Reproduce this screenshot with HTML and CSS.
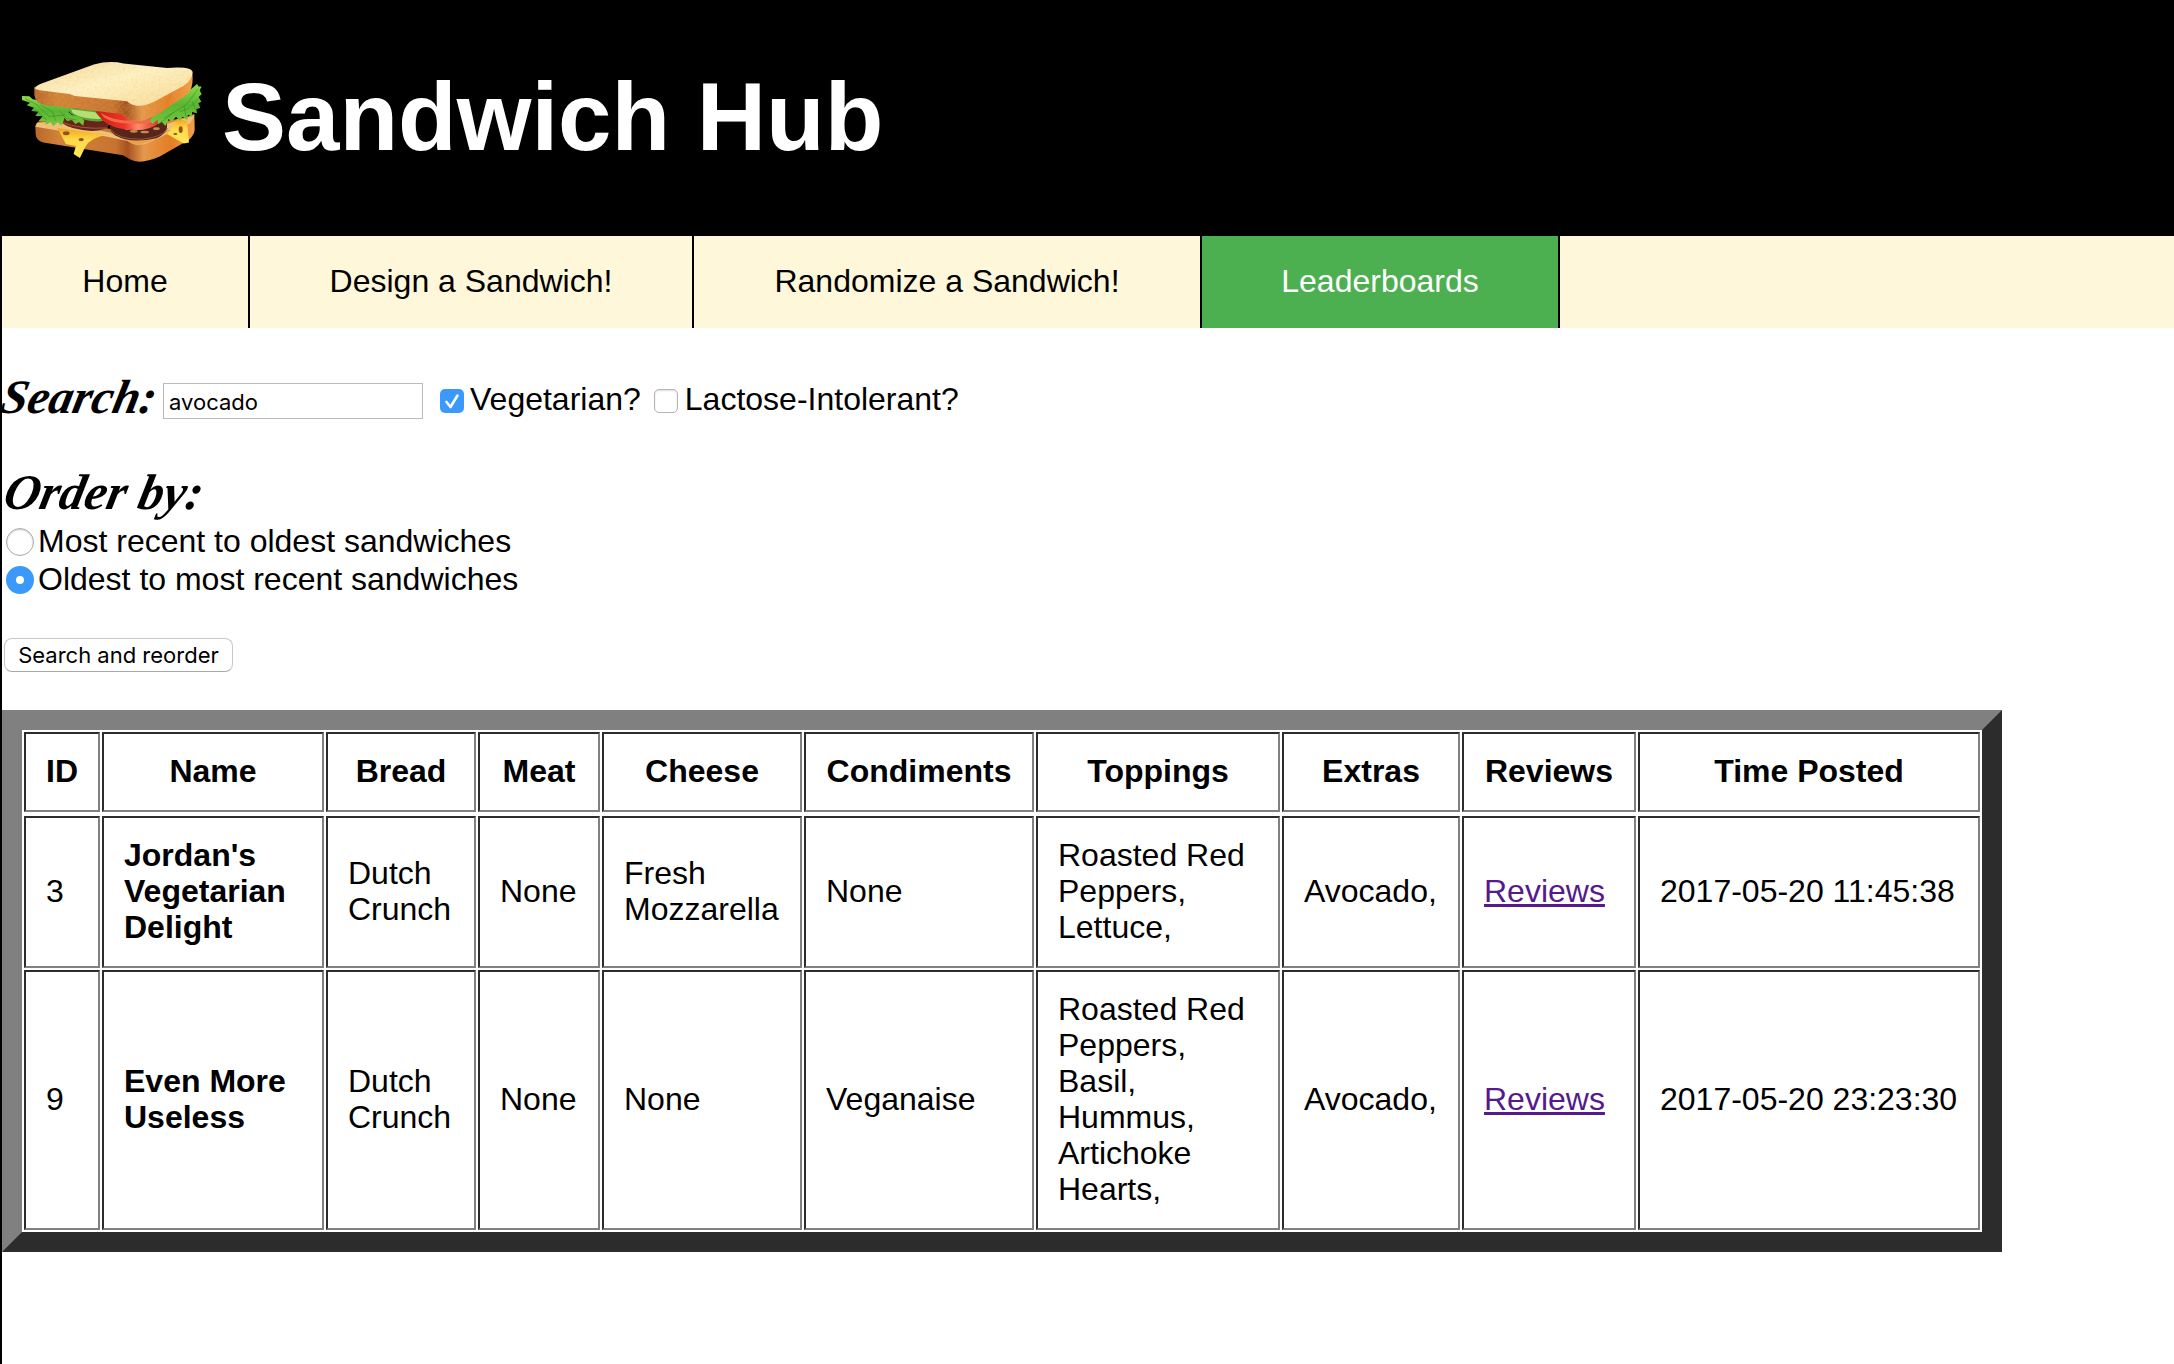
FILE: index.html
```html
<!DOCTYPE html>
<html lang="en">
<head>
<meta charset="utf-8">
<title>Sandwich Hub</title>
<link rel="stylesheet" href="styles.css">
</head>
<body>
<header class="banner">
  <svg class="logo" viewBox="60 60 550 312" aria-hidden="true">
    <defs>
      <linearGradient id="top" x1="0" y1="0" x2="1" y2="1"><stop offset="0" stop-color="#f4d796"/><stop offset=".45" stop-color="#fff2c4"/><stop offset="1" stop-color="#f8da94"/></linearGradient>
      <linearGradient id="crust" x1="0" y1="0" x2="1" y2="0"><stop offset="0" stop-color="#b9672b"/><stop offset=".15" stop-color="#d28339"/><stop offset=".5" stop-color="#c87431"/><stop offset=".58" stop-color="#a65220"/><stop offset=".68" stop-color="#e4984c"/><stop offset=".85" stop-color="#e47e25"/><stop offset="1" stop-color="#f2a14b"/></linearGradient>
      <linearGradient id="leaf" x1="0" y1="0" x2="0" y2="1"><stop offset="0" stop-color="#8ddb4a"/><stop offset=".5" stop-color="#58b534"/><stop offset="1" stop-color="#79c83e"/></linearGradient>
      <linearGradient id="cheese" x1="0" y1="0" x2="0" y2="1"><stop offset="0" stop-color="#efa421"/><stop offset=".4" stop-color="#ffda48"/><stop offset="1" stop-color="#ffe95d"/></linearGradient>
      <linearGradient id="tomato" x1="0" y1="0" x2="1" y2="0"><stop offset="0" stop-color="#c91c17"/><stop offset=".45" stop-color="#ee3526"/><stop offset=".65" stop-color="#ff8d69"/><stop offset="1" stop-color="#d72819"/></linearGradient>
      <filter id="grain" x="0" y="0" width="100%" height="100%"><feTurbulence type="fractalNoise" baseFrequency=".13" numOctaves="2" result="n"/><feColorMatrix in="n" values="0 0 0 0 .75 0 0 0 0 .45 0 0 0 0 .12 0 0 0 .5 -.2"/><feComposite in2="SourceGraphic" operator="in" result="g"/><feMerge><feMergeNode in="SourceGraphic"/><feMergeNode in="g"/></feMerge></filter>
    </defs>
    <path fill="url(#crust)" d="M106 258Q110 240 135 243L360 270L560 232L584 222L585 270Q582 288 567 300L480 350Q420 376 390 358L370 346L130 308Q108 302 107 282Z"/>
    <path fill="#eec078" d="M112 248L170 244L380 288L560 234L584 226L572 250L455 304Q415 326 384 303L300 286L180 272L106 260Z"/>
    <path fill="url(#cheese)" d="M172 264L320 284Q270 293 256 321L240 354L221 342L228 318L198 312Z"/>
    <path fill="url(#cheese)" d="M534 236L562 244L568 308L552 311L502 282Z"/>
    <g fill="#8c5422"><ellipse cx="199" cy="280" rx="10" ry="6"/><ellipse cx="244" cy="299" rx="8" ry="5"/><ellipse cx="543" cy="269" rx="6" ry="10"/><ellipse cx="527" cy="282" rx="6" ry="3"/></g>
    <path fill="#eba34a" d="M330 280L515 270L455 302Q410 325 388 305Z"/>
    <path fill="#672519" d="M187 238Q252 224 330 252Q322 272 275 273Q215 270 187 250Z"/>
    <path fill="none" stroke="#a8573e" stroke-width="3" d="M187 247Q238 269 324 264"/>
    <path fill="#57251a" d="M330 258L500 244Q510 278 470 295Q390 312 346 286Q330 274 330 258Z"/>
    <path fill="none" stroke="#92513e" stroke-width="3" d="M334 269Q350 298 425 298Q488 292 503 266"/>
    <g fill="#c68b4f"><ellipse cx="402" cy="274" rx="12" ry="4"/><ellipse cx="435" cy="276" rx="13" ry="4"/><ellipse cx="470" cy="266" rx="10" ry="4"/><ellipse cx="382" cy="267" rx="8" ry="3"/></g>
    <path fill="#56a735" d="M200 202L295 212L320 242Q255 252 211 220Z"/>
    <path fill="#b4df75" d="M213 208L286 217L304 237Q250 239 219 220Z"/>
    <path fill="url(#tomato)" d="M286 213L390 220L484 235Q480 260 430 269Q350 275 310 244Z"/>
    <path fill="#f16b49" d="M302 218Q350 253 465 239L450 248Q350 260 312 232Z"/>
    <path fill="url(#leaf)" d="M66 168L88 169L98 178L112 180L218 204L206 216L216 225L240 230L253 241L250 257L237 246L227 252L216 240L202 243L194 234L185 257L173 247L160 259L152 247L136 255L139 243L116 243L128 229L106 228L116 215L94 213L102 203L80 196L90 188L66 180Z"/>
    <path fill="none" stroke="#3d9226" stroke-width="2" d="M76 176L112 195L148 230L195 225M122 194L158 216L167 242M103 207L140 239M180 213L198 235L229 240"/>
    <path fill="url(#leaf)" d="M580 142L592 132L597 139L606 139L600 151L606 163L597 171L605 185L596 190L602 204L590 207L592 220L577 216L578 231L565 224L562 240L549 230L539 242L529 230L515 247L507 237L497 258L486 245L475 253L473 239L458 252L449 240L462 228Z"/>
    <path fill="none" stroke="#3d9226" stroke-width="2" d="M594 148L560 194L492 235M598 175L568 205L540 215M520 219L482 249M553 198L559 231M577 183L587 208"/>
    <path filter="url(#grain)" fill="url(#crust)" d="M103 140L250 145L380 180L578 102Q582 137 567 160L480 220Q420 257 380 235L365 222L140 196Q105 190 103 164Z"/>
    <path filter="url(#grain)" fill="url(#top)" d="M106 147Q103 138 125 130L282 73Q330 60 371 70L502 84Q579 78 579 98Q576 121 552 137L466 184Q410 212 382 184L225 168L209 162L119 151Z"/>
  </svg>
  <h1 class="title">Sandwich Hub</h1>
</header>
<div class="page">
  <nav class="nav">
    <a class="tab home">Home</a><a class="tab design">Design a Sandwich!</a><a class="tab random">Randomize a Sandwich!</a><a class="tab leaders active">Leaderboards</a>
  </nav>
  <form class="filters">
    <div class="search-row">
      <label class="script search-label" for="q">Search:</label>
      <input class="query" id="q" type="text" value="avocado">
      <label class="check"><span class="box checked"><svg viewBox="0 0 24 24"><path d="M6.5 13L10.5 18L17.5 6.5" fill="none" stroke="#fff" stroke-width="2.6" stroke-linecap="round" stroke-linejoin="round"/></svg></span>Vegetarian?</label>
      <label class="check second"><span class="box"></span>Lactose-Intolerant?</label>
    </div>
    <div class="script order-label">Order by:</div>
    <label class="option"><span class="radio"></span>Most recent to oldest sandwiches</label>
    <label class="option"><span class="radio selected"></span>Oldest to most recent sandwiches</label>
    <button class="submit" type="button">Search and reorder</button>
  </form>
  <table class="board">
    <colgroup><col class="c-id"><col class="c-name"><col class="c-bread"><col class="c-meat"><col class="c-cheese"><col class="c-cond"><col class="c-top"><col class="c-extra"><col class="c-rev"><col class="c-time"></colgroup>
    <tr><th>ID</th><th>Name</th><th>Bread</th><th>Meat</th><th>Cheese</th><th>Condiments</th><th>Toppings</th><th>Extras</th><th>Reviews</th><th>Time Posted</th></tr>
    <tr></tr>
    <tr><td>3</td><td><b>Jordan's<br>Vegetarian<br>Delight</b></td><td>Dutch<br>Crunch</td><td>None</td><td>Fresh<br>Mozzarella</td><td>None</td><td>Roasted Red<br>Peppers,<br>Lettuce,</td><td>Avocado,</td><td><a class="link">Reviews</a></td><td>2017-05-20 11:45:38</td></tr>
    <tr><td>9</td><td><b>Even More<br>Useless</b></td><td>Dutch<br>Crunch</td><td>None</td><td>None</td><td>Veganaise</td><td>Roasted Red<br>Peppers,<br>Basil,<br>Hummus,<br>Artichoke<br>Hearts,</td><td>Avocado,</td><td><a class="link">Reviews</a></td><td>2017-05-20 23:23:30</td></tr>
  </table>
</div>
</body>
</html>
```
FILE: styles.css
```css
* { box-sizing: border-box; }
body { margin: 0; background: #fff; color: #000; font: 32px/36px "Helvetica Neue", "Liberation Sans", Arial, sans-serif; overflow: hidden; }
.banner { height: 236px; background: #000; display: flex; align-items: center; padding: 0 0 6px 20px; }
.logo { width: 183px; height: 104px; flex: none; margin-top: -6px; }
.title { margin: 3px 0 0 19px; color: #fff; font-size: 96px; line-height: 110px; font-weight: bold; white-space: nowrap; }
.page { border-left: 2px solid #000; height: 1128px; }
.nav { display: flex; height: 92px; background: #fff7d9; }
.tab { padding: 27px 0 0; border-right: 2px solid #000; white-space: nowrap; text-align: center; }
.home { width: 248px; }
.design { width: 444px; }
.random { width: 508px; }
.leaders { width: 358px; }
.active { background: #4caf50; color: #fff; }
.filters { display: flex; flex-direction: column; align-items: flex-start; height: 382px; }
.script { font-family: "Snell Roundhand", "Liberation Serif", cursive; font-weight: bold; font-style: italic; font-size: 48px; line-height: 56px; white-space: nowrap; transform: skewX(-12deg); }
.search-row { display: flex; align-items: center; height: 74px; margin-top: 36px; }
.search-label { width: 161px; margin-top: -8px; }
.query { width: 260px; height: 36px; margin: 0; padding: 2px 5px 0; border: 1px solid #bbb; border-radius: 0; font: 22px "Inter", sans-serif; color: #000; background: #fff; outline: none; }
.check { display: flex; align-items: center; gap: 6px; margin: -4px 0 0 17px; white-space: nowrap; line-height: 36px; }
.second { margin-left: 13px; gap: 7px; }
.box { width: 24px; height: 24px; margin-top: 4px; border: 1px solid #b5b5b5; border-radius: 5px; box-shadow: inset 0 1px 2px #ddd; }
.checked { background: #3b99fc; border: 0; box-shadow: none; }
.box svg { display: block; width: 24px; height: 24px; }
.order-label { margin: 26px 0 2px 3px; font-size: 50px; }
.option { display: flex; align-items: center; gap: 4px; height: 38px; padding-left: 4px; white-space: nowrap; }
.radio { width: 28px; height: 28px; margin-top: 2px; border: 1px solid #aaa; border-radius: 50%; box-shadow: inset 0 1px 2px #ccc; }
.selected { border: 10px solid #3b99fc; box-shadow: none; background: #fff; }
.submit { width: 229px; height: 34px; margin: 40px 0 0 2px; padding: 0; border: 1px solid #c8c8c8; border-bottom-color: #aaa; border-radius: 8px; background: #fff; color: #000; font: 22px/32px "Inter", sans-serif; white-space: nowrap; }
.board { width: 2000px; table-layout: fixed; border: 20px solid; border-color: #808080 #2c2c2c #2c2c2c #808080; border-spacing: 2px; }
th, td { padding: 19px 20px 21px; border: 2px solid; border-color: #2c2c2c #808080 #808080 #2c2c2c; white-space: nowrap; }
td { text-align: left; vertical-align: middle; }
.c-id { width: 76px; }
.c-name { width: 222px; }
.c-bread { width: 150px; }
.c-meat { width: 122px; }
.c-cheese { width: 200px; }
.c-cond { width: 230px; }
.c-top { width: 244px; }
.c-extra { width: 178px; }
.c-rev { width: 174px; }
.c-time { width: 342px; }
.link { color: #551a8b; text-decoration: underline; }
```
